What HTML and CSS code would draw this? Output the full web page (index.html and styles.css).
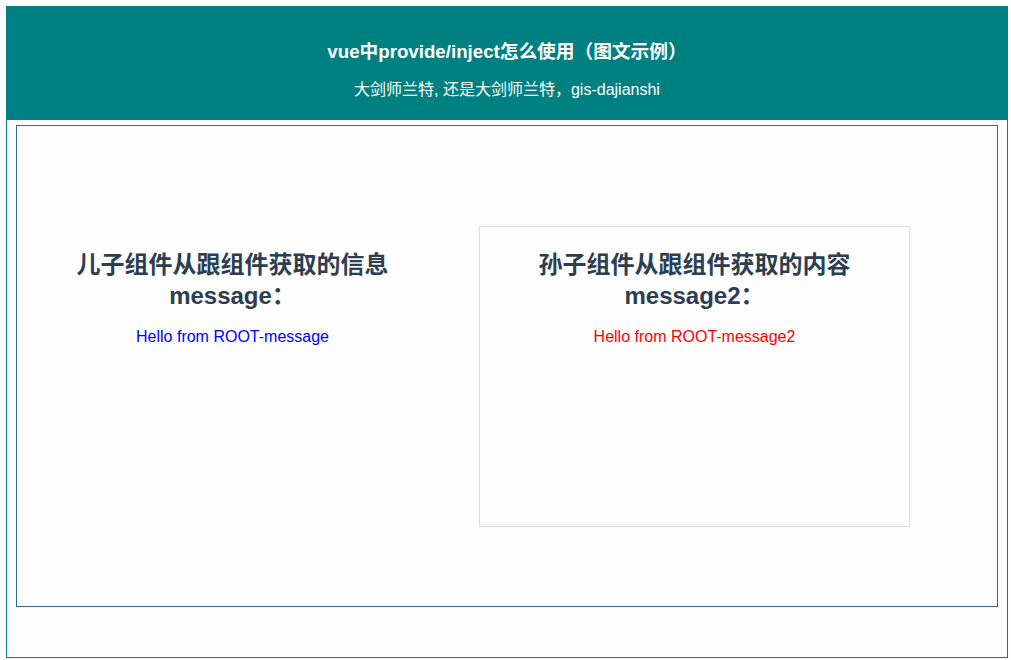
FILE: index.html
```html
<!DOCTYPE html>
<html lang="zh-CN">
<head>
  <meta charset="UTF-8" />
  <title>vue中provide/inject怎么使用</title>
  <link rel="stylesheet" href="styles.css">
</head>
<body>
  <div class="page">
    <header class="top">
      <h1>vue中provide/inject怎么使用（图文示例）</h1>
      <p>大剑师兰特, 还是大剑师兰特，gis-dajianshi</p>
    </header>

    <div class="container">
      <div class="boxes">
        <!-- 儿子组件 -->
        <div class="box son">
          <h2>儿子组件从跟组件获取的信息<br>message：</h2>
          <p class="msg blue">Hello from ROOT-message</p>
        </div>

        <!-- 孙子组件 -->
        <div class="box grandson">
          <h2>孙子组件从跟组件获取的内容<br>message2：</h2>
          <p class="msg red">Hello from ROOT-message2</p>
        </div>
      </div>
    </div>
  </div>
</body>
</html>
```
FILE: styles.css
```css
body {
  margin: 0;
  font-family: "Liberation Sans", Arial, "Noto Sans CJK SC", sans-serif;
  background: #fdfdfd;
}

.page {
  margin: 6px 0 0 6px;
  width: 1000px;
  height: 650px;
  border: 1px solid #008080;
}

.top {
  background-color: #008080;
  color: white;
  text-align: center;
  padding: 33px 0 20px;
}

.top h1 {
  margin: 0;
  font-size: 18.7px;
  line-height: 24px;
  font-weight: bold;
}

.top p {
  margin: 16px 0 0;
  font-size: 16px;
  line-height: 20px;
}

.container {
  margin: 5px 9px 0;
  height: 480px;
  border: 1px solid #336699;
}

.boxes {
  display: flex;
  gap: 31px;
  padding-top: 100px;
}

.box {
  width: 389px;
  height: 299px;
  padding: 0 20px;
  border: 1px solid transparent;
  text-align: center;
}

.grandson {
  border-color: #ddd;
}

.box h2 {
  margin: 22px 0 0;
  font-size: 24px;
  line-height: 31px;
  color: #2c3e50;
}

.msg {
  margin: 16px 0 0;
  font-size: 16px;
  line-height: 20px;
}

.blue {
  color: blue;
}

.red {
  color: red;
}
```
